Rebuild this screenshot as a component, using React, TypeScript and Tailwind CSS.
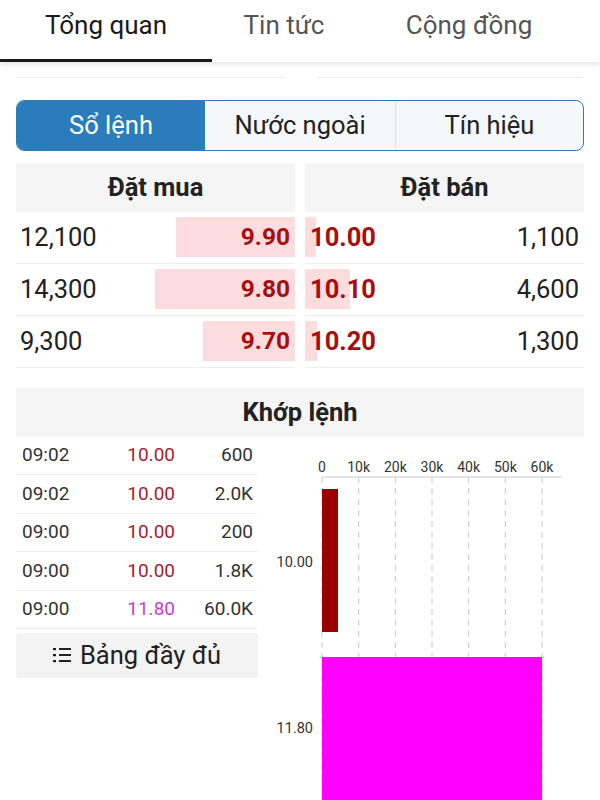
import React from "react";

const BIDS = [
  { vol: "12,100", price: "9.90", bar: 119 },
  { vol: "14,300", price: "9.80", bar: 140 },
  { vol: "9,300", price: "9.70", bar: 92 },
];

const ASKS = [
  { vol: "1,100", price: "10.00", bar: 11 },
  { vol: "4,600", price: "10.10", bar: 45 },
  { vol: "1,300", price: "10.20", bar: 12 },
];

const TRADES = [
  { time: "09:02", price: "10.00", vol: "600", hot: false },
  { time: "09:02", price: "10.00", vol: "2.0K", hot: false },
  { time: "09:00", price: "10.00", vol: "200", hot: false },
  { time: "09:00", price: "10.00", vol: "1.8K", hot: false },
  { time: "09:00", price: "11.80", vol: "60.0K", hot: true },
];

const TICKS = ["0", "10k", "20k", "30k", "40k", "50k", "60k"];

function ListIcon() {
  return (
    <svg width="19" height="16" viewBox="0 0 19 16" fill="none">
      <rect x="0" y="1" width="3" height="2.2" fill="#222" />
      <rect x="0" y="7" width="3" height="2.2" fill="#222" />
      <rect x="0" y="13" width="3" height="2.2" fill="#222" />
      <rect x="6" y="1" width="12" height="2" fill="#222" />
      <rect x="6" y="7" width="12" height="2" fill="#222" />
      <rect x="6" y="13" width="12" height="2" fill="#222" />
    </svg>
  );
}

function MatchChart() {
  const x0 = 64;
  const step = 36.67;
  return (
    <svg width="342" height="363" viewBox="0 0 342 363">
      {TICKS.map((t, i) => (
        <text
          key={t}
          x={x0 + i * step}
          y={35}
          textAnchor="middle"
          fontSize="14"
          fill="#333"
          fontFamily="Roboto, sans-serif"
        >
          {t}
        </text>
      ))}
      <line x1={x0} y1={40} x2={304} y2={40} stroke="#c8c8c8" strokeWidth="1" />
      {TICKS.map((t, i) => (
        <line
          key={"g" + t}
          x1={x0 + i * step}
          y1={40}
          x2={x0 + i * step}
          y2={363}
          stroke="#c8c8c8"
          strokeWidth="1"
          strokeDasharray="6 5"
        />
      ))}
      <rect x={x0} y={52} width={16} height={143} fill="#990000" />
      <rect x={x0} y={220} width={220} height={143} fill="#ff00ff" />
      <text x={55} y={130} textAnchor="end" fontSize="14.5" fill="#333" fontFamily="Roboto, sans-serif">
        10.00
      </text>
      <text x={55} y={296} textAnchor="end" fontSize="14.5" fill="#333" fontFamily="Roboto, sans-serif">
        11.80
      </text>
    </svg>
  );
}

export default function App() {
  return (
    <div className="w-[600px] h-[800px] overflow-hidden bg-white font-['Roboto',sans-serif] text-[#222]">
      {/* Top tabs */}
      <div className="relative z-10 flex h-[62px] bg-white pb-[11px] shadow-[0_3px_4px_rgba(0,0,0,0.08)]">
        <div className="relative flex w-[212px] items-center justify-center text-[26px] text-[#1a1a1a]">
          Tổng quan
          <div className="absolute bottom-[-11px] left-0 right-0 h-[3px] bg-[#1a1a1a]" />
        </div>
        <div className="flex w-[144px] items-center justify-center text-[26px] text-[#555]">Tin tức</div>
        <div className="flex w-[226px] items-center justify-center text-[26px] text-[#555]">Cộng đồng</div>
      </div>

      <div className="px-4">
        {/* remnant lines of the section above */}
        <div className="mt-[15px] flex gap-[32px]">
          <div className="h-px w-[269px] bg-[#ececec]" />
          <div className="h-px w-[266px] bg-[#ececec]" />
        </div>

        {/* Segment control */}
        <div className="mt-[22px] flex h-[51px] overflow-hidden rounded-[8px] border border-[#2b7cba] bg-[#f4f8fb] text-[25.5px]">
          <div className="flex w-[188px] items-center justify-center bg-[#2b7cba] text-white">Sổ lệnh</div>
          <div className="flex w-[191px] items-center justify-center border-r border-[#dde3e8] text-[#222]">
            Nước ngoài
          </div>
          <div className="flex flex-1 items-center justify-center text-[#222]">Tín hiệu</div>
        </div>

        {/* Order book */}
        <div className="mt-[12px] flex gap-[10px]">
          <div className="w-[280px]">
            <div className="flex h-[49px] items-center justify-center bg-[#f5f5f5] text-[25.5px] font-bold">Đặt mua</div>
            {BIDS.map((r) => (
              <div key={r.vol} className="relative flex h-[52px] items-center justify-between border-b border-[#efefef] pl-[4px] pr-[5px]">
                <div
                  className="absolute right-0 top-[5px] h-[40px] bg-[#fcdcdd]"
                  style={{ width: r.bar }}
                />
                <span className="relative text-[25.5px] text-[#222]">{r.vol}</span>
                <span className="relative text-[24.5px] font-bold text-[#a80d10]">{r.price}</span>
              </div>
            ))}
          </div>
          <div className="w-[280px]">
            <div className="flex h-[49px] items-center justify-center bg-[#f5f5f5] text-[25.5px] font-bold">Đặt bán</div>
            {ASKS.map((r) => (
              <div key={r.vol} className="relative flex h-[52px] items-center justify-between border-b border-[#efefef] pl-[5px] pr-[5px]">
                <div
                  className="absolute left-0 top-[5px] h-[40px] bg-[#fcdcdd]"
                  style={{ width: r.bar }}
                />
                <span className="relative text-[25.5px] font-bold text-[#a80d10]">{r.price}</span>
                <span className="relative text-[25.5px] text-[#222]">{r.vol}</span>
              </div>
            ))}
          </div>
        </div>

        {/* Matched orders */}
        <div className="mt-[20px] flex h-[49px] items-center justify-center bg-[#f5f5f5] text-[25.5px] font-bold">
          Khớp lệnh
        </div>
      </div>

      <div className="flex">
        <div className="ml-4 w-[242px]">
          {TRADES.map((t, i) => (
            <div key={i} className="flex h-[38.4px] items-center border-b border-[#efefef] pl-[6px] text-[19px]">
              <span className="w-[100px] text-[#333]">{t.time}</span>
              <span className={"w-[53px] text-right " + (t.hot ? "text-[#c23fd6]" : "text-[#a3232f]")}>{t.price}</span>
              <span className="w-[78px] text-right text-[#333]">{t.vol}</span>
            </div>
          ))}
          <div className="mt-[4px] flex h-[45px] items-center justify-center gap-[8px] rounded-[3px] bg-[#f3f3f3] text-[25.5px] text-[#222]">
            <ListIcon />
            <span>Bảng đầy đủ</span>
          </div>
        </div>
        <MatchChart />
      </div>
    </div>
  );
}
